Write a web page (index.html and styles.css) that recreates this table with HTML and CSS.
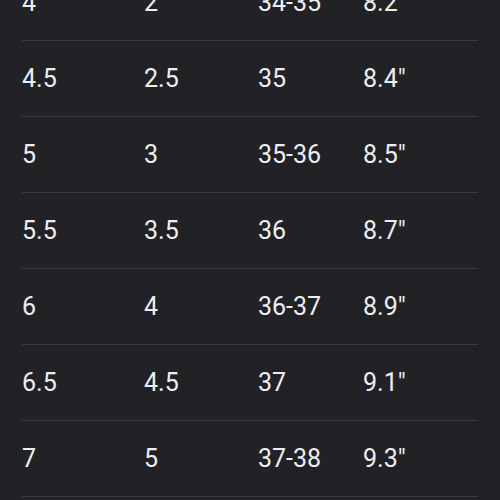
FILE: index.html
```html
<!DOCTYPE html>
<html>
<head>
  <title>Size Chart</title>
  <link rel="stylesheet" href="styles.css">
</head>
<body>
  <div class="chart">
    <div class="row"><span>4</span><span>2</span><span>34-35</span><span>8.2"</span></div>
    <div class="row"><span>4.5</span><span>2.5</span><span>35</span><span>8.4"</span></div>
    <div class="row"><span>5</span><span>3</span><span>35-36</span><span>8.5"</span></div>
    <div class="row"><span>5.5</span><span>3.5</span><span>36</span><span>8.7"</span></div>
    <div class="row"><span>6</span><span>4</span><span>36-37</span><span>8.9"</span></div>
    <div class="row"><span>6.5</span><span>4.5</span><span>37</span><span>9.1"</span></div>
    <div class="row"><span>7</span><span>5</span><span>37-38</span><span>9.3"</span></div>
  </div>
</body>
</html>
```

FILE: styles.css
```css
html, body { background: #222226; }
body { margin: 0; font-family: Roboto, "Liberation Sans", sans-serif; color: #eeeef0; overflow: hidden; height: 500px; }
.chart { margin: -35px 22px 0; }
.row { display: grid; grid-template-columns: 122px 114px 105px 1fr; align-items: center; height: 75px; border-bottom: 1px solid #3a3a3f; font-size: 25px; }
```
